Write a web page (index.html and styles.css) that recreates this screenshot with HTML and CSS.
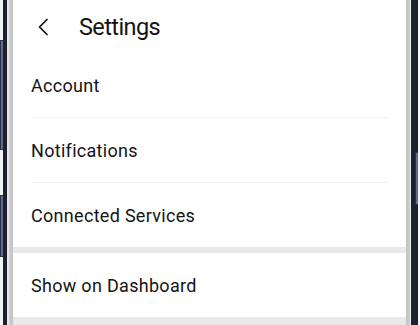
FILE: index.html
```html
<!DOCTYPE html>
<html>
<head>
<meta charset="utf-8">
<link rel="stylesheet" href="styles.css">
</head>
<body>
<div class="device">
  <div class="frame-left">
    <div class="edge-outer">
      <div class="side-btn btn-vol"></div>
      <div class="side-btn btn-bixby"></div>
    </div>
    <div class="edge-dark"></div>
    <div class="edge-rim"></div>
    <div class="edge-bezel"></div>
  </div>
  <div class="screen">
    <div class="header">
      <svg class="back" width="12" height="18" viewBox="0 0 12 18">
        <path d="M10 1.5 L2.5 9 L10 16.5" fill="none" stroke="#111" stroke-width="1.7" stroke-linecap="round" stroke-linejoin="round"/>
      </svg>
      <span class="title">Settings</span>
    </div>
    <div class="group">
      <div class="row divided">Account</div>
      <div class="row divided">Notifications</div>
      <div class="row">Connected Services</div>
    </div>
    <div class="band"></div>
    <div class="group">
      <div class="row">Show on Dashboard</div>
    </div>
    <div class="band band-bottom"></div>
  </div>
  <div class="frame-right">
    <div class="edge-bezel-r"></div>
    <div class="edge-rim-r"></div>
    <div class="edge-dark-r">
      <div class="side-btn btn-power"></div>
    </div>
    <div class="edge-outer-r"></div>
  </div>
</div>
</body>
</html>
```

FILE: styles.css
```css
html, body {
  margin: 0;
  padding: 0;
  background: #ffffff;
}
body {
  width: 420px;
  height: 325px;
  overflow: hidden;
  font-family: Roboto, "Liberation Sans", sans-serif;
  color: #141414;
}
.device {
  display: flex;
  width: 420px;
  height: 325px;
}
.frame-left {
  display: flex;
  width: 13px;
  flex: none;
}
.edge-outer {
  width: 3px;
  background: #f2f3f6;
  display: flex;
  flex-direction: column;
}
.side-btn {
  background: #5d6d8e;
  box-sizing: border-box;
  border: 1px solid #2a3246;
  border-right: none;
}
.btn-vol {
  margin-top: 40px;
  height: 110px;
}
.btn-bixby {
  margin-top: 45px;
  height: 62px;
}
.edge-dark {
  width: 4px;
  background: #1c212d;
}
.edge-rim {
  width: 2px;
  background: #e6e8ec;
}
.edge-bezel {
  width: 4px;
  background: linear-gradient(to right, #cfcfd1, #c2c2c4);
}
.screen {
  width: 393px;
  flex: none;
  display: flex;
  flex-direction: column;
  background: #ffffff;
}
.header {
  height: 53px;
  display: flex;
  align-items: center;
  flex: none;
}
.back {
  margin-left: 24px;
  margin-top: 1px;
}
.title {
  margin-left: 30px;
  font-size: 23.5px;
  line-height: 28px;
  letter-spacing: -0.6px;
}
.group {
  display: flex;
  flex-direction: column;
  flex: none;
}
.row {
  height: 64px;
  display: flex;
  align-items: center;
  margin: 0 18px;
  font-size: 18px;
  letter-spacing: 0.3px;
  box-sizing: border-box;
}
.row.divided {
  height: 65px;
  border-bottom: 1px solid #f1f1f1;
}
.band {
  height: 6px;
  background: #e9e9e9;
  flex: none;
}
.band-bottom {
  height: 8px;
}
.frame-right {
  display: flex;
  width: 14px;
  flex: none;
}
.edge-bezel-r {
  width: 4px;
  background: linear-gradient(to right, #c2c2c4, #cfcfd1);
}
.edge-rim-r {
  width: 1px;
  background: #e6e8ec;
}
.edge-dark-r {
  width: 7px;
  background: #1c212d;
  display: flex;
  flex-direction: column;
  align-items: flex-end;
}
.btn-power {
  width: 3px;
  height: 53px;
  margin-top: 152px;
  border: 1px solid #2a3246;
  border-right: none;
}
.edge-outer-r {
  width: 2px;
  background: #f2f3f6;
}
```
